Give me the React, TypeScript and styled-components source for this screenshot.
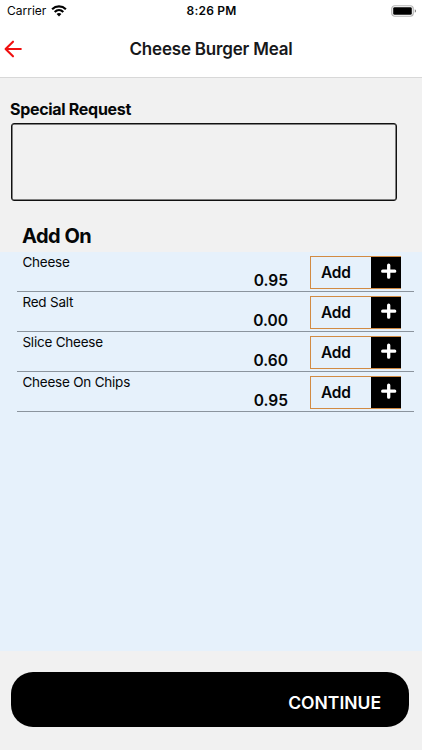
import React from "react";
import styled, { createGlobalStyle } from "styled-components";

const GlobalStyle = createGlobalStyle`
  * { box-sizing: border-box; }
  body { margin: 0; background: #f1f1f1; font-family: Inter, "Liberation Sans", sans-serif; color: #050708; }
  button { font: inherit; color: inherit; border: 0; padding: 0; background: none; }
  h1, h2 { margin: 0; }
`;

const Screen = styled.div`
  width: 422px;
  height: 750px;
  display: flex;
  flex-direction: column;
  overflow: hidden;
  background: #f1f1f1;
`;

const Header = styled.header`
  height: 78px;
  flex: none;
  background: #fff;
  border-bottom: 1px solid #d8d8d8;
`;

const StatusBar = styled.div`
  height: 22px;
  display: grid;
  grid-template-columns: 1fr auto 1fr;
  align-items: center;
  padding: 0 6px 0 7px;
`;

const Carrier = styled.div`
  display: flex;
  align-items: center;
  gap: 5px;
  font-size: 12px;
  line-height: 22px;
`;

const Clock = styled.div`
  font-size: 12px;
  font-weight: 600;
  line-height: 22px;
  letter-spacing: 0.2px;
`;

const BatterySlot = styled.div`
  display: flex;
  justify-content: flex-end;
`;

const NavBar = styled.nav`
  height: 53px;
  display: grid;
  grid-template-columns: 40px 1fr 40px;
  align-items: center;
`;

const BackButton = styled.button`
  display: flex;
  padding-left: 4px;
`;

const Title = styled.h1`
  text-align: center;
  padding-top: 2px;
  font-size: 17px;
  font-weight: 600;
  line-height: 25px;
  letter-spacing: -0.2px;
  color: #17181a;
`;

const Request = styled.section`
  height: 174px;
  flex: none;
  display: flex;
  flex-direction: column;
  padding: 20px 25px 0 10px;
`;

const RequestLabel = styled.label`
  font-size: 16px;
  font-weight: 700;
  line-height: 22px;
  letter-spacing: -0.3px;
`;

const RequestInput = styled.textarea`
  height: 78px;
  margin: 3px 0 0 1px;
  border: 1px solid #111;
  border-radius: 3px;
  box-shadow: inset 0 0 0 0.5px #111;
  background: transparent;
  resize: none;
`;

const SectionTitle = styled.h2`
  margin: 21px 0 0 12px;
  font-size: 20px;
  font-weight: 700;
  line-height: 29px;
  letter-spacing: -0.5px;
`;

const AddOnList = styled.main`
  height: 399px;
  flex: none;
  background: #e6f1fb;
  padding: 0 8px 0 17px;
`;

const AddOnRow = styled.div`
  height: 40px;
  display: grid;
  grid-template-columns: 1fr 92px 91px;
  column-gap: 22px;
  padding: 0 13px 0 5px;
  border-bottom: 1px solid #8b949d;
`;

const ItemName = styled.div`
  padding-left: 0.4px;
  font-size: 13.5px;
  line-height: 20px;
  letter-spacing: -0.22px;
  white-space: nowrap;
`;

const Price = styled.div`
  align-self: end;
  text-align: right;
  font-size: 15.5px;
  font-weight: 600;
  line-height: 20px;
`;

const AddButton = styled.button`
  height: 33px;
  margin-top: 4px;
  display: flex;
  border: 1px solid #d28b43;
  border-right: 0;
`;

const AddLabel = styled.span`
  width: 60px;
  padding-left: 10px;
  text-align: left;
  font-size: 15.5px;
  font-weight: 600;
  line-height: 32px;
  letter-spacing: -0.2px;
`;

const PlusTile = styled.span`
  width: 30px;
  height: 31px;
  display: flex;
  background: #000;
`;

const Footer = styled.footer`
  height: 99px;
  padding: 21px 13px 0 11px;
`;

const ContinueButton = styled.button`
  width: 398px;
  height: 55px;
  display: flex;
  align-items: center;
  justify-content: flex-end;
  padding: 5px 28px 0 0;
  border-radius: 22px;
  background: #000;
  color: #fff;
  font-size: 17.5px;
  font-weight: 600;
`;

const WifiIcon = () => (
  <svg width="16" height="12" viewBox="0 0 16 12" fill="none" stroke="#000" strokeWidth="2.2">
    <path d="M1.1 4.2C5 .5 11 .5 14.9 4.2M3.7 7C6.2 4.6 9.8 4.6 12.3 7" />
    <path d="M5.6 8.9C7 7.7 9 7.7 10.4 8.9L8 11.4Z" fill="#000" stroke="none" />
  </svg>
);

const BatteryIcon = () => (
  <svg width="25" height="12" viewBox="0 0 25 12">
    <rect x="0.75" y="0.75" width="21.5" height="10.5" rx="3" fill="#fff" stroke="#b5b5b5" strokeWidth="1.2" />
    <rect x="2.2" y="2.2" width="18.6" height="7.6" rx="1.4" />
    <path d="M23.8 4.3q1.2.5 1.2 1.7t-1.2 1.7z" fill="#777" />
  </svg>
);

const BackIcon = () => (
  <svg width="18" height="18" viewBox="0 0 18 18" fill="none" stroke="#f01010" strokeWidth="2.1" strokeLinecap="round" strokeLinejoin="round">
    <path d="M16.8 9H1.8M9 1.7L1.6 9L9 16.3" />
  </svg>
);

const PlusIcon = () => (
  <svg width="30" height="31" viewBox="0 0 30 31" stroke="#fff" strokeWidth="3.3" strokeLinecap="round">
    <path d="M11.7 14.2H23.7M17.7 8.2V20.2" />
  </svg>
);

const addOns = [
  { name: "Cheese", price: "0.95" },
  { name: "Red Salt", price: "0.00" },
  { name: "Slice Cheese", price: "0.60" },
  { name: "Cheese On Chips", price: "0.95" },
];

export default function App() {
  return (
    <Screen>
      <GlobalStyle />
      <Header>
        <StatusBar>
          <Carrier>Carrier <WifiIcon /></Carrier>
          <Clock>8:26 PM</Clock>
          <BatterySlot><BatteryIcon /></BatterySlot>
        </StatusBar>
        <NavBar>
          <BackButton aria-label="Back"><BackIcon /></BackButton>
          <Title>Cheese Burger Meal</Title>
        </NavBar>
      </Header>
      <Request>
        <RequestLabel htmlFor="request">Special Request</RequestLabel>
        <RequestInput id="request" />
        <SectionTitle>Add On</SectionTitle>
      </Request>
      <AddOnList>
        {addOns.map(({ name, price }) => (
          <AddOnRow key={name}>
            <ItemName>{name}</ItemName>
            <Price>{price}</Price>
            <AddButton>
              <AddLabel>Add</AddLabel>
              <PlusTile><PlusIcon /></PlusTile>
            </AddButton>
          </AddOnRow>
        ))}
      </AddOnList>
      <Footer>
        <ContinueButton>CONTINUE</ContinueButton>
      </Footer>
    </Screen>
  );
}
